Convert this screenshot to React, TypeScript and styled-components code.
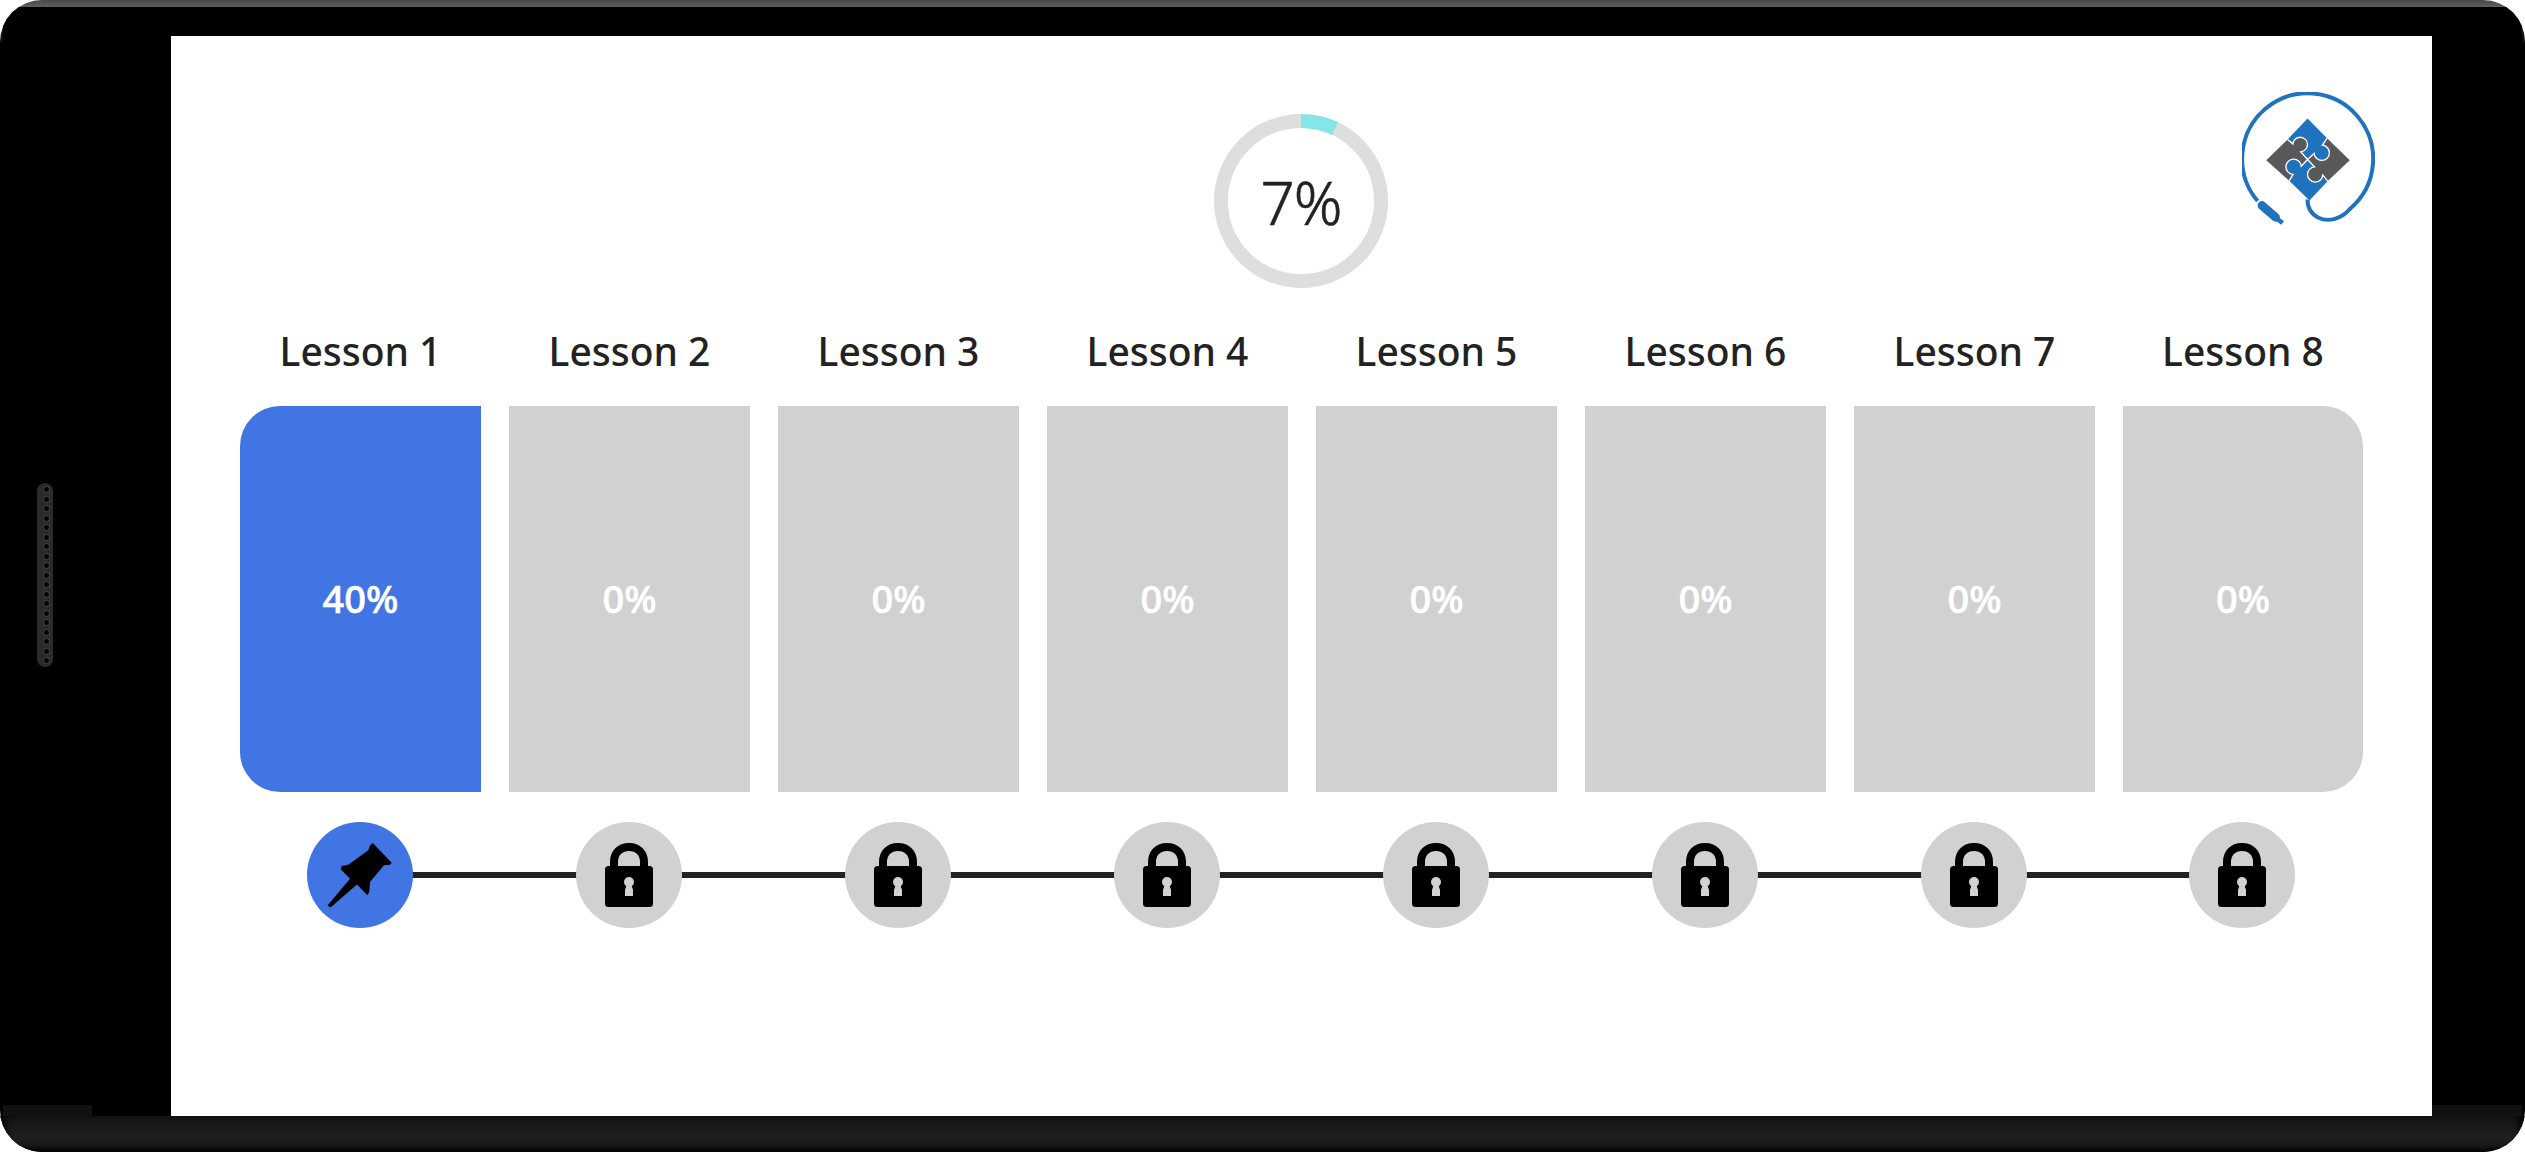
import * as React from 'react'
import styled, {createGlobalStyle} from 'styled-components'

const GlobalStyle = createGlobalStyle`
  html, body {
    margin: 0;
    padding: 0;
    background: #fff;
    font-family: "Noto Sans", "Open Sans", sans-serif;
  }
`

const Device = styled.div`
  width: 2525px;
  height: 1152px;
  border-radius: 42px;
  overflow: hidden;
  display: flex;
  flex-direction: column;
  padding-top: 7px;
  box-sizing: border-box;
  background: linear-gradient(to bottom, #474747 0, #5e5e5e 7px, #3a3a3a 14px, #000 46px);
`

const Body = styled.div`
  flex: 1;
  margin: 0 3px;
  display: flex;
  background: #000;
  border-radius: 34px 34px 0 0;
`

const LeftSide = styled.div`
  width: 168px;
  box-sizing: border-box;
  padding: 476px 0 0 34px;
  background: linear-gradient(#111, #111) left bottom / 89px 11px no-repeat, #000;
`

const RightSide = styled.div`
  flex: 1;
  background: linear-gradient(#111, #111) left bottom / 100% 11px no-repeat, #000;
`

const Speaker = styled.div`
  width: 16px;
  height: 184px;
  border-radius: 8px;
  background: #2b2b2b;
  display: flex;
  flex-direction: column;
  align-items: flex-end;
  justify-content: space-between;
  padding: 3px 3px 3px 0;
  box-sizing: border-box;
`

const SpeakerHole = styled.div`
  width: 7px;
  height: 7px;
  border-radius: 50%;
  background: #000;
  border: 1px solid #4a4a4a;
  box-sizing: border-box;
`

const Screen = styled.main`
  width: 2261px;
  height: 1080px;
  margin-top: 29px;
  background: #fff;
  box-sizing: border-box;
  padding: 56px 69px 0 69px;
`

const Chin = styled.div`
  height: 36px;
  flex-shrink: 0;
  background: linear-gradient(to bottom, #151515 0, #1f1f1f 62%, #171717 82%, #050505 100%);
  box-shadow: inset 10px 0 8px -5px #000, inset -10px 0 8px -5px #000;
`

const Header = styled.header`
  display: grid;
  grid-template-columns: 1fr auto 1fr;
  align-items: start;
`

const Ring = styled.div`
  grid-column: 2;
  width: 174px;
  height: 174px;
  margin: 22px 1px 0 0;
  display: grid;
  place-items: center;
  > * {
    grid-area: 1 / 1;
  }
`

const RingValue = styled.div`
  font-size: 60px;
  font-weight: 300;
  -webkit-text-stroke: 0.6px #222;
  letter-spacing: -1px;
  line-height: 1;
  padding-top: 2px;
  color: #222;
`

const Logo = styled.svg`
  grid-column: 3;
  justify-self: end;
  width: 133px;
  height: 133px;
  margin-right: -12px;
`

const Lessons = styled.section`
  display: grid;
  grid-template-columns: repeat(7, 241px) 240px;
  column-gap: 28px;
  margin-top: 39px;
`

const LessonColumn = styled.div`
  display: flex;
  flex-direction: column;
  align-items: center;
`

const LessonTitle = styled.h2`
  margin: 0;
  height: 50px;
  font-size: 39px;
  font-weight: 500;
  line-height: 48px;
  color: #222;
`

const LessonCard = styled.div<{ $active?: boolean; $first?: boolean; $last?: boolean }>`
  width: 100%;
  height: 386px;
  margin-top: 29px;
  padding-bottom: 3px;
  box-sizing: border-box;
  display: flex;
  align-items: center;
  justify-content: center;
  background: ${p => (p.$active ? '#4175e3' : '#d1d1d1')};
  border-radius: ${p => (p.$first ? '40px 0 0 40px' : p.$last ? '0 40px 40px 0' : '0')};
  color: #fff;
  font-size: 38px;
  font-weight: 500;
  -webkit-text-stroke: 0.6px #fff;
  line-height: 1;
`

const Timeline = styled.div`
  position: relative;
  display: grid;
  grid-template-columns: repeat(7, 241px) 240px;
  column-gap: 28px;
  justify-items: center;
  margin: 30px 0 0 -1px;
  &::before {
    content: '';
    position: absolute;
    left: 120px;
    right: 120px;
    top: 50px;
    height: 6px;
    background: #222;
  }
`

const TimelineNode = styled.div<{ $active?: boolean }>`
  position: relative;
  width: 106px;
  height: 106px;
  border-radius: 50%;
  background: ${p => (p.$active ? '#4175e3' : '#d1d1d1')};
`

const NodeIcon = styled.svg`
  display: block;
  width: 106px;
  height: 106px;
`

const PinIcon = () => (
    <NodeIcon viewBox="0 0 106 106">
        <path
            fill="#000"
            d="M65.7 21 L84.7 40.7 L83 42.7 L77 43.3 L63 60 L62.3 70 L60.3 73.3 L50 62.5 L23.5 85.5 L20.5 83.5 L43 56.7 L33.7 47.3 L34.7 44 L41.3 42.7 L61.3 28.3 L63 23.3 Z"
        />
    </NodeIcon>
)

const LockIcon = () => (
    <NodeIcon viewBox="0 0 106 106">
        <path fill="none" stroke="#000" strokeWidth="8" d="M38 46 V40 C38 31 44 25 53 25 C62 25 68 31 68 40 V46" />
        <rect x="29" y="44" width="48" height="41" rx="3.5" fill="#000" />
        <circle cx="53" cy="60" r="5" fill="#d1d1d1" />
        <path fill="#d1d1d1" d="M51 62 H55 L57 68 V74 H49 V68 Z" />
    </NodeIcon>
)

const PuzzleLogo = () => (
    <Logo viewBox="125 97 400 400">
        <path
            fill="none"
            stroke="#1f72bd"
            strokeWidth="12"
            d="M172 425 A197 197 0 1 1 450 448 C425 478 385 490 355 475 C335 465 322 445 322 420"
        />
        <path fill="none" stroke="#1f72bd" strokeWidth="26" strokeLinecap="round" d="M185 438 L226 474" />
        <path fill="none" stroke="#1f72bd" strokeWidth="14" d="M225 474 L247 491" />
        <path fill="#1f72bd" d="M322 177 L381 236 L322 300 L262 240 Z" />
        <path fill="#595959" d="M198 302 L262 240 L322 300 L267 364 Z" />
        <path fill="#595959" d="M449 302 L381 236 L322 300 L383 365 Z" />
        <path fill="#1f72bd" d="M328 423 L383 365 L322 300 L267 364 Z" />
        <circle cx="300" cy="255" r="22" fill="#595959" />
        <circle cx="365" cy="280" r="23" fill="#1f72bd" />
        <circle cx="280" cy="322" r="23" fill="#1f72bd" />
        <circle cx="345" cy="345" r="23" fill="#595959" />
        <g fill="none" stroke="#fff" strokeWidth="4">
            <path d="M262 240 L278 253 A22 22 0 1 1 302 277 L322 300" />
            <path d="M381 236 L367 257 A23 23 0 1 1 342 282 L322 300" />
            <path d="M267 364 L278 345 A23 23 0 1 1 303 320 L322 300" />
            <path d="M383 365 L368 347 A23 23 0 1 1 343 322 L322 300" />
        </g>
    </Logo>
)

const ProgressRing = ({value}: {value: number}) => {
    const r = 80
    const c = 2 * Math.PI * r
    return (
        <Ring>
            <svg width="174" height="174" viewBox="0 0 174 174">
                <circle cx="87" cy="87" r={r} fill="none" stroke="#dedede" strokeWidth="14" />
                <circle
                    cx="87"
                    cy="87"
                    r={r}
                    fill="none"
                    stroke="#84e6e8"
                    strokeWidth="14"
                    strokeDasharray={`${(c * value) / 100} ${c}`}
                    transform="rotate(-90 87 87)"
                />
            </svg>
            <RingValue>{value}%</RingValue>
        </Ring>
    )
}

const lessons = [
    {title: 'Lesson 1', progress: 40},
    {title: 'Lesson 2', progress: 0},
    {title: 'Lesson 3', progress: 0},
    {title: 'Lesson 4', progress: 0},
    {title: 'Lesson 5', progress: 0},
    {title: 'Lesson 6', progress: 0},
    {title: 'Lesson 7', progress: 0},
    {title: 'Lesson 8', progress: 0},
]

export default function App() {
    return (
        <Device>
            <GlobalStyle />
            <Body>
                <LeftSide>
                    <Speaker>
                        {Array.from({length: 19}, (_, i) => <SpeakerHole key={i} />)}
                    </Speaker>
                </LeftSide>
                <Screen>
                    <Header>
                        <ProgressRing value={7} />
                        <PuzzleLogo />
                    </Header>
                    <Lessons>
                        {lessons.map((lesson, i) => (
                            <LessonColumn key={lesson.title}>
                                <LessonTitle>{lesson.title}</LessonTitle>
                                <LessonCard $active={i === 0} $first={i === 0} $last={i === lessons.length - 1}>
                                    {lesson.progress}%
                                </LessonCard>
                            </LessonColumn>
                        ))}
                    </Lessons>
                    <Timeline>
                        {lessons.map((lesson, i) => (
                            <TimelineNode key={lesson.title} $active={i === 0}>
                                {i === 0 ? <PinIcon /> : <LockIcon />}
                            </TimelineNode>
                        ))}
                    </Timeline>
                </Screen>
                <RightSide />
            </Body>
            <Chin />
        </Device>
    )
}
